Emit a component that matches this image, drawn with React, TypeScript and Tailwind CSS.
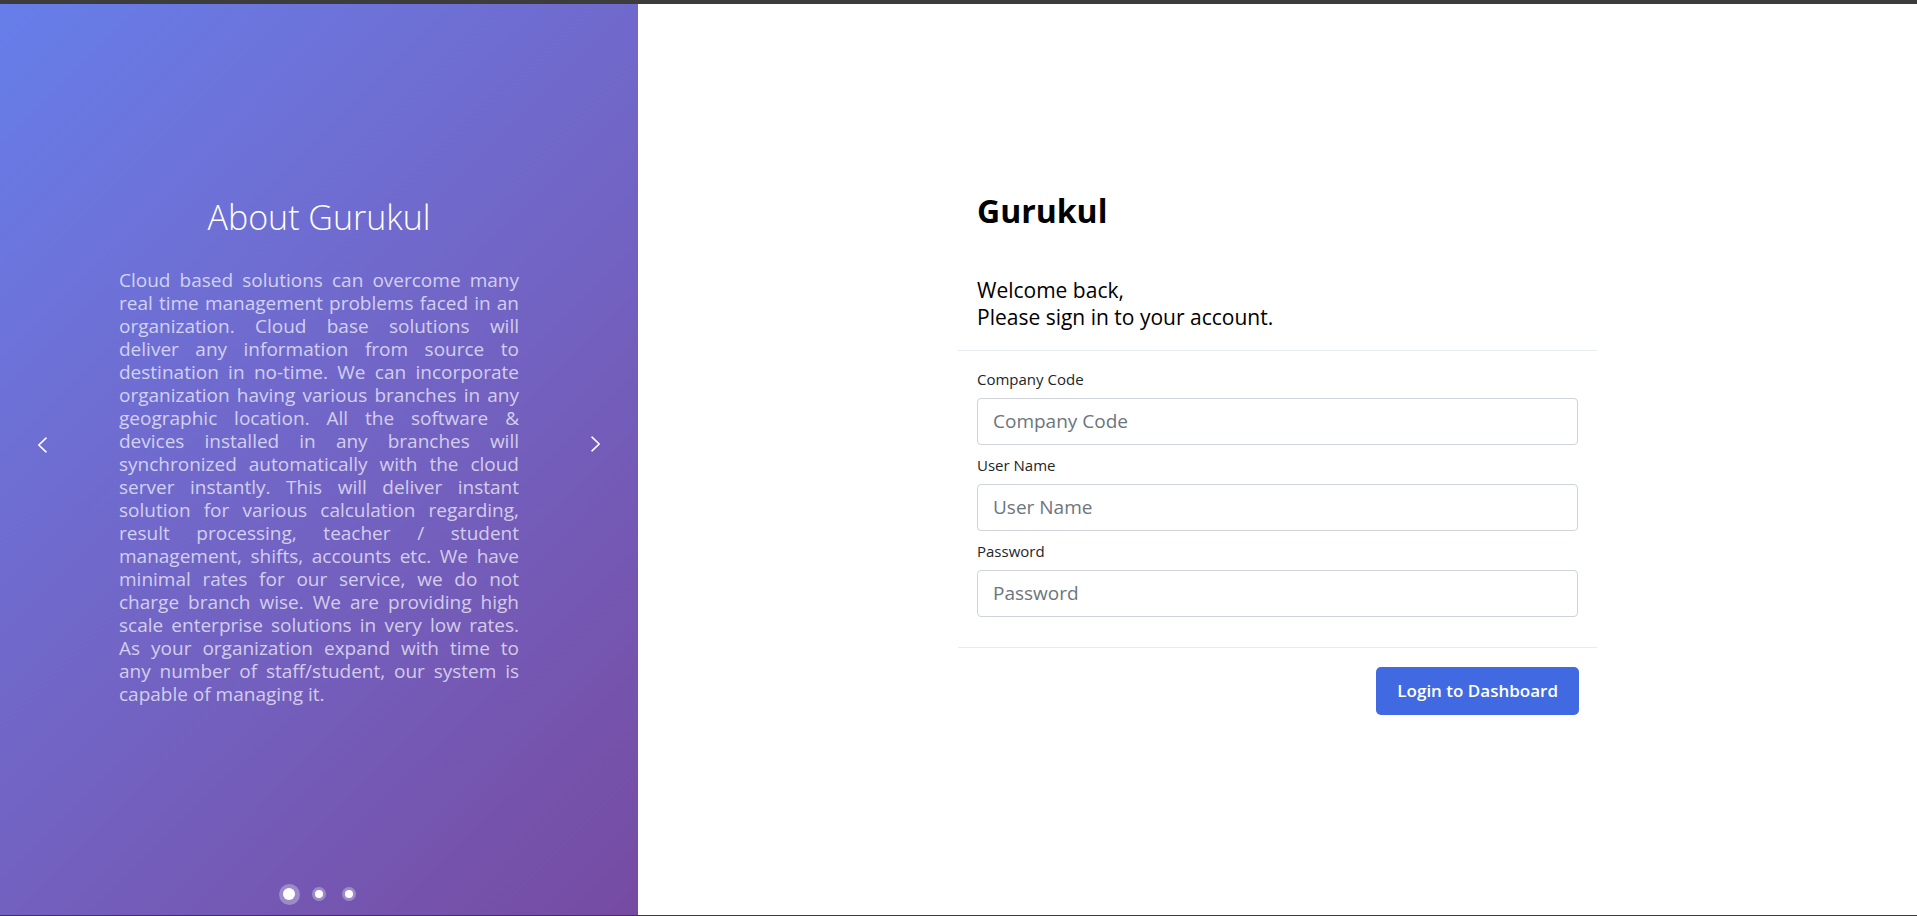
import { useState } from 'react';

const ABOUT_TEXT =
  'Cloud based solutions can overcome many real time management problems faced in an organization. Cloud base solutions will deliver any information from source to destination in no-time. We can incorporate organization having various branches in any geographic location. All the software & devices installed in any branches will synchronized automatically with the cloud server instantly. This will deliver instant solution for various calculation regarding, result processing, teacher / student management, shifts, accounts etc. We have minimal rates for our service, we do not charge branch wise. We are providing high scale enterprise solutions in very low rates. As your organization expand with time to any number of staff/student, our system is capable of managing it.';

const FIELDS = [
  { id: 'companyCode', label: 'Company Code', type: 'text' },
  { id: 'userName', label: 'User Name', type: 'text' },
  { id: 'password', label: 'Password', type: 'password' },
];

// ---------- Carousel ----------

const Chevron = ({ dir }: { dir: 'left' | 'right' }) => (
  <svg width="10" height="16" viewBox="0 0 10 16" fill="none" aria-hidden="true">
    <path
      d={dir === 'left' ? 'M9 1.2L1.8 8L9 14.8' : 'M1 1.2L8.2 8L1 14.8'}
      stroke="white"
      strokeWidth="1.6"
      strokeLinecap="round"
      strokeLinejoin="round"
    />
  </svg>
);

const AboutCarousel = () => {
  const [active, setActive] = useState(0);

  return (
    <section className="relative w-[638px] shrink-0 bg-linear-135 from-[#667eea] to-[#764ba2] flex flex-col items-center justify-center pb-[16px]">
      <h2 className="text-[34px] leading-[40px] font-light text-white">
        About Gurukul
      </h2>
      <p className="mt-[32px] w-[400px] text-[19px] leading-[23px] text-white/70 text-justify">
        {ABOUT_TEXT}
      </p>

      <button
        type="button"
        aria-label="Previous"
        className="absolute left-[37px] top-[433px] p-0"
        onClick={() => setActive((active + 2) % 3)}
      >
        <Chevron dir="left" />
      </button>
      <button
        type="button"
        aria-label="Next"
        className="absolute right-[37px] top-[432px] p-0"
        onClick={() => setActive((active + 1) % 3)}
      >
        <Chevron dir="right" />
      </button>

      <div className="absolute bottom-[10px] left-0 right-0 flex justify-center gap-[8px]">
        {[0, 1, 2].map((i) => (
          <button
            key={i}
            type="button"
            onClick={() => setActive(i)}
            className="w-[22px] h-[22px] flex items-center justify-center"
          >
            {i === active ? (
              <span className="w-[21px] h-[21px] rounded-full bg-white/30 flex items-center justify-center">
                <span className="w-[12px] h-[12px] rounded-full bg-white" />
              </span>
            ) : (
              <span className="w-[14px] h-[14px] rounded-full bg-white/30 flex items-center justify-center">
                <span className="w-[8px] h-[8px] rounded-full bg-white" />
              </span>
            )}
          </button>
        ))}
      </div>
    </section>
  );
};

// ---------- Login ----------

const LoginCard = () => {
  const [values, setValues] = useState<Record<string, string>>({});

  return (
    <div className="w-[639px] pt-[7px] pb-[21px]">
      <div className="px-[19px] pb-[19px] border-b border-[#e9ecef]">
        <h1 className="text-[32px] leading-[40px] font-bold text-black">
          Gurukul
        </h1>
        <p className="mt-[46px] text-[21px] leading-[27px] text-black">
          Welcome back,
          <br />
          Please sign in to your account.
        </p>
      </div>

      <div className="px-[19px] pt-[18px] pb-[30px] border-b border-[#e9ecef] flex flex-col gap-[10px]">
        {FIELDS.map((field) => (
          <div key={field.id} className="flex flex-col">
            <label
              htmlFor={field.id}
              className="text-[15px] leading-[20px] text-[#212529] mb-[9px]"
            >
              {field.label}
            </label>
            <input
              id={field.id}
              type={field.type}
              placeholder={field.label}
              value={values[field.id] ?? ''}
              onChange={(e) =>
                setValues((prev) => ({ ...prev, [field.id]: e.target.value }))
              }
              className="h-[47px] w-full rounded-[4px] border border-[#ced4da] px-[15px] text-[19px] text-[#495057] placeholder:text-[#6c757d] outline-none"
            />
          </div>
        ))}
      </div>

      <div className="px-[18px] pt-[19px] flex justify-end">
        <button
          type="button"
          className="h-[48px] px-[21px] rounded-[5px] bg-[#4169e1] text-white text-[17px] font-semibold"
        >
          Login to Dashboard
        </button>
      </div>
    </div>
  );
};

export default function App() {
  return (
    <div className="h-[916px] flex flex-col bg-white font-['Open_Sans','Noto_Sans',sans-serif]">
      <div className="h-[4px] bg-[#3c3c3c]" />
      <main className="flex-1 flex">
        <AboutCarousel />
        <div className="flex-1 flex items-center justify-center">
          <LoginCard />
        </div>
      </main>
      <div className="h-[1px] bg-[#3c3c3c]" />
    </div>
  );
}
